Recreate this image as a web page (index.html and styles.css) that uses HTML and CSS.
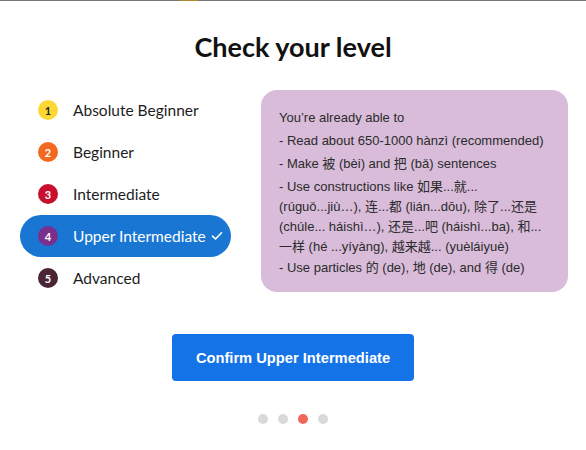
FILE: index.html
```html
<!DOCTYPE html>
<html lang="en">
<head>
<meta charset="utf-8">
<link rel="stylesheet" href="styles.css">
</head>
<body>
<div class="topbar"><span class="topbar-mark"></span></div>
<h1 class="title">Check your level</h1>
<div class="main">
  <ul class="levels">
    <li class="level"><span class="num n1">1</span>Absolute Beginner</li>
    <li class="level"><span class="num n2">2</span>Beginner</li>
    <li class="level"><span class="num n3">3</span>Intermediate</li>
    <li class="level selected"><span class="num n4">4</span>Upper Intermediate
      <svg class="check" width="12" height="10" viewBox="0 0 12 10"><path d="M1.5 5.2 L4.5 8 L10.5 1.8" fill="none" stroke="#fff" stroke-width="1.6" stroke-linecap="round" stroke-linejoin="round"/></svg>
    </li>
    <li class="level"><span class="num n5">5</span>Advanced</li>
  </ul>
  <div class="info">
    <p>You’re already able to</p>
    <p>- Read about 650-1000 hànzì (recommended)</p>
    <p>- Make 被 (bèi) and 把 (bǎ) sentences</p>
    <p>- Use constructions like 如果...就... (rúguǒ...jiù…), 连...都 (lián...dōu), 除了...还是 (chúle... háishì…), 还是...吧 (háishì...ba), 和... 一样 (hé ...yíyàng), 越来越... (yuèláiyuè)</p>
    <p class="last">- Use particles 的 (de), 地 (de), and 得 (de)</p>
  </div>
</div>
<div class="actions">
  <button class="confirm">Confirm Upper Intermediate</button>
</div>
<div class="dots">
  <span class="dot"></span><span class="dot"></span><span class="dot active"></span><span class="dot"></span>
</div>
</body>
</html>
```

FILE: styles.css
```css
html, body {
  margin: 0;
  padding: 0;
  background: #fff;
}
body {
  width: 586px;
  font-family: "Lato", "Open Sans", sans-serif;
  color: #1d1d1d;
}
.topbar {
  height: 1px;
  background: #777;
  display: flex;
}
.topbar-mark {
  margin-left: 180px;
  width: 18px;
  height: 1px;
  background: #b08a2a;
}
.title {
  margin: 0;
  padding-top: 31px;
  height: 55px;
  box-sizing: border-box;
  text-align: center;
  font-size: 27px;
  font-weight: 700;
  line-height: 30px;
  color: #111;
}
.main {
  display: flex;
  align-items: flex-start;
  padding-left: 20px;
  margin-top: 33px;
}
.levels {
  list-style: none;
  margin: 0;
  padding: 0;
  width: 211px;
}
.level {
  height: 42px;
  display: flex;
  align-items: center;
  padding-left: 18px;
  font-size: 15.5px;
  color: #1d1d1d;
}
.level.selected {
  background: #1976d2;
  color: #fff;
  border-radius: 21px;
}
.num {
  width: 20px;
  height: 20px;
  border-radius: 50%;
  margin-right: 15px;
  display: flex;
  align-items: center;
  justify-content: center;
  font-size: 11px;
  font-weight: 700;
  color: #fff;
}
.n1 { background: #fdd835; color: #222; }
.n2 { background: #f26a21; }
.n3 { background: #c8102e; }
.n4 { background: #7b2f8c; }
.n5 { background: #4a2535; }
.check {
  margin-left: 5px;
}
.info {
  margin-left: 30px;
  margin-top: 1px;
  width: 307px;
  height: 202px;
  box-sizing: border-box;
  background: #d8bcd9;
  border-radius: 16px;
  padding: 18px 16px 0 18px;
  font-family: "Liberation Sans", "Noto Sans CJK SC", sans-serif;
  font-size: 13px;
  line-height: 20px;
  color: #2b2b2b;
}
.info p {
  margin: 0 0 3px 0;
}
.info .last {
  margin-top: -2px;
}
.actions {
  display: flex;
  justify-content: center;
  margin-top: 35px;
}
.confirm {
  width: 242px;
  height: 47px;
  border: none;
  border-radius: 4px;
  background: #1473e6;
  color: #fff;
  font-family: "Liberation Sans", sans-serif;
  font-size: 14.7px;
  font-weight: 700;
}
.dots {
  display: flex;
  justify-content: center;
  gap: 10px;
  margin-top: 33px;
}
.dot {
  width: 10px;
  height: 10px;
  border-radius: 50%;
  background: #d9d9d9;
}
.dot.active {
  background: #f0675c;
}
```
